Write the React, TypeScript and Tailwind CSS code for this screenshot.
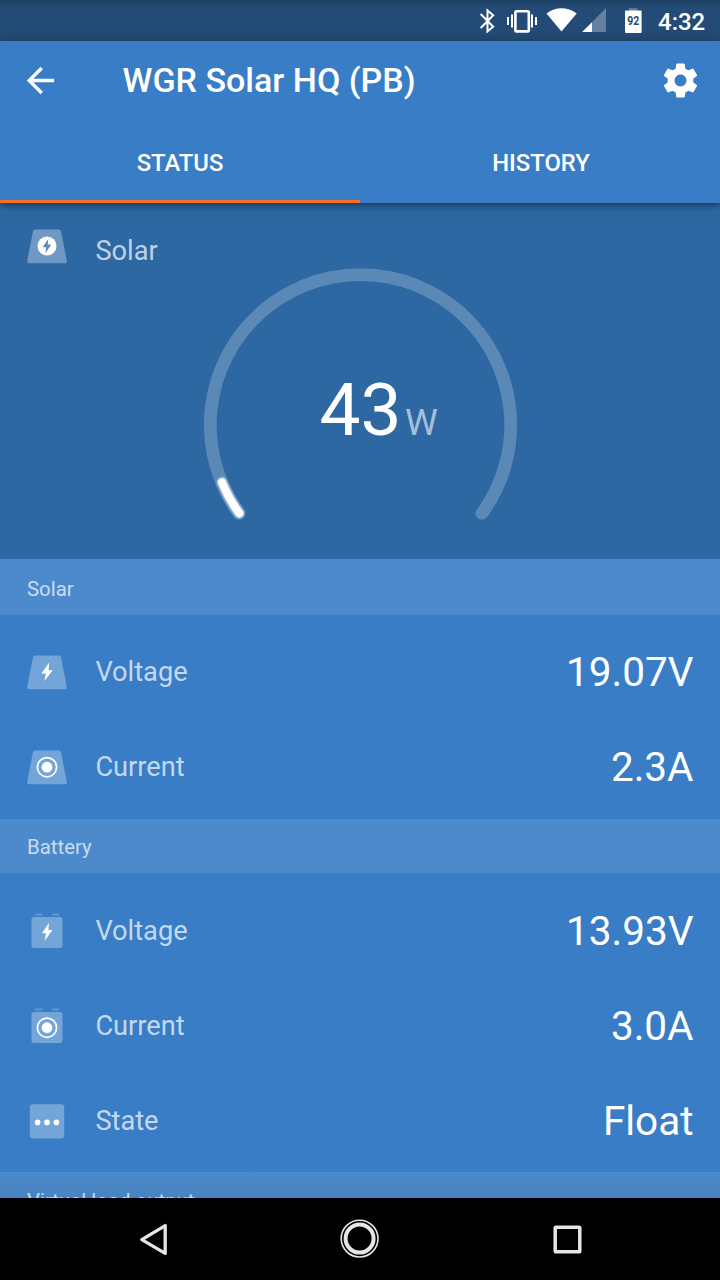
import type { ReactNode } from "react";

type Glyph = "bolt" | "target" | "dots" | "badge";
type Shape = "panel" | "battery" | "box";

function DeviceIcon({ shape, glyph }: { shape: Shape; glyph: Glyph }) {
  const cy = shape === "battery" ? 19.7 : 18.2;
  return (
    <svg width="48" height="38" viewBox="0 0 48 38" className="block">
      <g fill={glyph === "badge" ? "#6f99c4" : "#74a5d8"}>
        {shape === "panel" && (
          <path d="M12 1.5 H36 Q37.7 1.5 38.1 3.4 L43.8 33 Q44.2 35.2 42 35.2 H6 Q3.8 35.2 4.2 33 L9.9 3.4 Q10.3 1.5 12 1.5 Z" />
        )}
        {shape === "battery" && (
          <>
            <rect x="8.5" y="3.9" width="31" height="31" rx="2.6" />
            <rect x="12.2" y="0.6" width="7" height="2" rx="0.6" opacity=".7" />
            <rect x="29.2" y="0.6" width="7" height="2" rx="0.6" opacity=".7" />
          </>
        )}
        {shape === "box" && <rect x="6.8" y="1.2" width="34.4" height="34.4" rx="3" />}
      </g>
      {glyph === "bolt" && (
        <path
          d={shape === "battery" ? "M26 9.8 L19 20.2 H23 L21.6 28 L29.4 17 H25.4 Z" : "M26.2 8.6 L18.4 19.4 H22.8 L21.4 27 L29.8 16.2 H25.6 Z"}
          fill="#fff"
        />
      )}
      {glyph === "badge" && (
        <>
          <circle cx="24" cy="18" r="9.5" fill="#fff" />
          <path d="M25.2 11 L19.8 19.2 H23.2 L22.4 25.2 L28.2 16.6 H24.7 Z" fill="#6186b0" />
        </>
      )}
      {glyph === "target" && (
        <>
          <circle cx="24" cy={cy} r="9.6" fill="none" stroke="#fff" strokeWidth="1.7" />
          <circle cx="24" cy={cy} r="5.4" fill="#fff" />
        </>
      )}
      {glyph === "dots" && (
        <g fill="#fff">
          <circle cx="14.6" cy="19.4" r="2.8" />
          <circle cx="24" cy="19.4" r="2.8" />
          <circle cx="33.4" cy="19.4" r="2.8" />
        </g>
      )}
    </svg>
  );
}

function Row({ shape, glyph, label, value }: { shape: Shape; glyph: Glyph; label: string; value: string }) {
  return (
    <div className="flex h-[95px] items-center pr-[26.5px] pl-[23px]">
      <DeviceIcon shape={shape} glyph={glyph} />
      <span className="ml-[24.4px] text-[27.2px] text-[#c4d8ef]">{label}</span>
      <span className="ml-auto text-[40.5px] text-white">{value}</span>
    </div>
  );
}

function Section({ title, header, body, children }: { title: string; header: string; body: string; children?: ReactNode }) {
  return (
    <section>
      <h2 className={`flex items-center pl-[27px] text-[20.4px] text-[#c9dcf0] ${header}`}>{title}</h2>
      <div className={body}>{children}</div>
    </section>
  );
}

function StatusBar() {
  return (
    <div className="h-[41px] shrink-0 bg-[#234b75] bg-linear-to-b from-[#1f4165] to-[#234b75] to-20%">
      <svg width="720" height="41" viewBox="0 0 720 41" className="block">
        <g fill="none" stroke="#fff" strokeWidth="2">
          <path d="M480.7 14 L493.2 26.7 L487.5 31.3 V10.5 L493.2 15.3 L480.7 28" />
          <rect x="515.4" y="11.2" width="13.4" height="20.2" rx="1.2" strokeWidth="2.6" />
          <path d="M508 17v8 M512 14.5v13 M532 14.5v13 M536 17v8" />
        </g>
        <path d="M546.5 13.4 Q561.5 3.3 576.7 13.4 L561.5 31.6 Z" fill="#fff" />
        <path d="M582.2 32 L606 8 V32 Z" fill="#66819f" />
        <path d="M582.2 32 L592 22.2 V32 Z" fill="#fff" />
        <path d="M629 8.2 h8.4 v3 h-8.4z" fill="#66819f" />
        <rect x="625" y="10.6" width="16.6" height="22.4" rx="1" fill="#fff" />
        <text x="633.2" y="25.2" textAnchor="middle" textLength="12" lengthAdjust="spacingAndGlyphs" fontSize="12.6" fontWeight="700" fill="#234b75">92</text>
        <text x="658" y="30" fontSize="24" fontWeight="500" fill="#fff">4:32</text>
      </svg>
    </div>
  );
}

function AppBar() {
  return (
    <header className="relative z-10 flex h-[162px] shrink-0 flex-col bg-[#397dc7] text-white shadow-[0_2px_8px_rgba(0,0,0,0.5)]">
      <div className="flex h-[79px] items-center pr-[19px] pl-5">
        <svg width="41" height="41" viewBox="0 0 24 24" fill="#fff">
          <path d="M20 11H7.83l5.59-5.59L12 4l-8 8 8 8 1.41-1.41L7.83 13H20v-2z" />
        </svg>
        <h1 className="ml-[61.5px] text-[34px] font-medium">WGR Solar HQ (PB)</h1>
        <svg width="41" height="41" viewBox="0 0 24 24" fill="#fff" className="ml-auto">
          <path d="M19.43 12.98c.04-.32.07-.64.07-.98s-.03-.66-.07-.98l2.11-1.65c.19-.15.24-.42.12-.64l-2-3.46c-.12-.22-.39-.3-.61-.22l-2.49 1c-.52-.4-1.08-.73-1.69-.98l-.38-2.65C14.46 2.18 14.25 2 14 2h-4c-.25 0-.46.18-.49.42l-.38 2.65c-.61.25-1.17.59-1.69.98l-2.49-1c-.23-.09-.49 0-.61.22l-2 3.46c-.13.22-.07.49.12.64l2.11 1.65c-.04.32-.07.65-.07.98s.03.66.07.98l-2.11 1.65c-.19.15-.24.42-.12.64l2 3.46c.12.22.39.3.61.22l2.49-1c.52.4 1.08.73 1.69.98l.38 2.65c.03.24.24.42.49.42h4c.25 0 .46-.18.49-.42l.38-2.65c.61-.25 1.17-.59 1.69-.98l2.49 1c.23.09.49 0 .61-.22l2-3.46c.12-.22.07-.49-.12-.64l-2.11-1.65zM12 15.5c-1.93 0-3.5-1.57-3.5-3.5s1.57-3.5 3.5-3.5 3.5 1.57 3.5 3.5-1.57 3.5-3.5 3.5z" />
        </svg>
      </div>
      <nav className="grid h-[83px] grid-cols-2 text-[23.8px] font-medium">
        <div className="flex items-center justify-center border-b-[3px] border-[#fb6d25] pt-2">STATUS</div>
        <div className="flex items-center justify-center border-b-[3px] border-transparent pt-2 pl-[2px]">HISTORY</div>
      </nav>
    </header>
  );
}

function Gauge() {
  return (
    <div className="grid h-[356px] shrink-0 bg-[#2d68a3]">
      <div className="flex items-start pt-[25px] pl-[23px] [grid-area:1/1]">
        <DeviceIcon shape="panel" glyph="badge" />
        <span className="ml-[24.4px] pt-[7px] text-[27.2px] leading-8 text-[#bfd2e6]">Solar</span>
      </div>
      <svg width="720" height="356" viewBox="0 203 720 356" fill="none" strokeLinecap="round" className="[grid-area:1/1]">
        <defs>
          <filter id="glow" x="-50%" y="-50%" width="200%" height="200%">
            <feGaussianBlur stdDeviation="1.3" />
          </filter>
        </defs>
        <path d="M239 513.2 A150.2 150.2 0 1 1 482 513.2" stroke="#5a88b7" strokeWidth="12.8" />
        <path d="M222 482.2 Q228.5 498.5 239.3 513.2" stroke="#fff" strokeWidth="9.5" opacity=".7" filter="url(#glow)" />
        <path d="M222 482.2 Q228.5 498.5 239.3 513.2" stroke="#fff" strokeWidth="8" />
      </svg>
      <div className="flex items-baseline pt-[164px] pl-[319.5px] [grid-area:1/1]">
        <span className="text-[73px] leading-[86px] text-white">43</span>
        <span className="ml-[3.5px] text-[37px] text-[#a4bfda]">W</span>
      </div>
    </div>
  );
}

function NavBar() {
  return (
    <div className="h-[82px] shrink-0 bg-black">
      <svg width="720" height="82" viewBox="0 1198 720 82" fill="none" stroke="#e6e6e6" className="block">
        <path d="M141.8 1239.6 L165.2 1225.6 V1253.4 Z" strokeWidth="3.3" strokeLinejoin="round" />
        <circle cx="359.6" cy="1238.6" r="18.4" strokeWidth="1.6" />
        <circle cx="359.6" cy="1238.6" r="14" strokeWidth="4" />
        <rect x="555.2" y="1227.2" width="24.6" height="24.6" rx="0.8" strokeWidth="3.5" />
      </svg>
    </div>
  );
}

export default function App() {
  return (
    <div className="flex h-[1280px] w-[720px] flex-col overflow-hidden bg-[#397dc7] font-['Roboto','Liberation_Sans',sans-serif]">
      <StatusBar />
      <AppBar />
      <Gauge />
      <main className="h-[639px] shrink-0 overflow-hidden">
        <Section title="Solar" header="h-14 bg-[#4c8acb] pt-1" body="h-[204px] pt-[10px]">
          <Row shape="panel" glyph="bolt" label="Voltage" value="19.07V" />
          <Row shape="panel" glyph="target" label="Current" value="2.3A" />
        </Section>
        <Section title="Battery" header="h-[54px] bg-[#4c8acb] pt-[3px]" body="h-[299px] pt-[11px]">
          <Row shape="battery" glyph="bolt" label="Voltage" value="13.93V" />
          <Row shape="battery" glyph="target" label="Current" value="3.0A" />
          <Row shape="box" glyph="dots" label="State" value="Float" />
        </Section>
        <Section title="Virtual load output" header="h-[54px] bg-linear-to-b from-[#4c8acb] to-[#447dba] pt-[4px]" body="h-0" />
      </main>
      <NavBar />
    </div>
  );
}
